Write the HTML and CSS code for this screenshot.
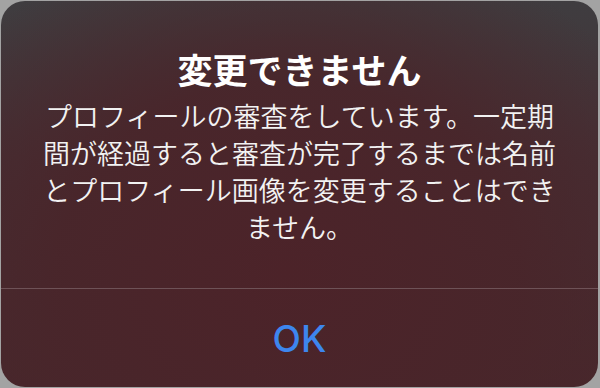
FILE: index.html
```html
<!DOCTYPE html>
<html lang="ja">

<head>
    <meta charset="UTF-8">
    <meta name="viewport"
          content="width=device-width, initial-scale=1.0">
    <title>Alert</title>
    <link rel="stylesheet" href="styles.css">
</head>

<body>
    <div id="alert">
        <div class="alert-content">
            <div class="alert-title">変更できません</div>
            <div class="alert-message">プロフィールの審査をしています。一定期間が経過すると審査が完了するまでは名前とプロフィール画像を変更することはできません。</div>
        </div>
        <div class="alert-actions">
            <button class="alert-button">OK</button>
        </div>
    </div>
</body>

</html>
```

FILE: styles.css
```css
html,
body {
    margin: 0;
    padding: 0;
    width: 600px;
    height: 388px;
    overflow: hidden;
    background-color: #a3a3a3;
    font-family: "Noto Sans CJK JP", sans-serif;
}

#alert {
    margin: 1px 2px 0 1px;
    height: 386px;
    border-radius: 24px;
    overflow: hidden;
    display: flex;
    flex-direction: column;
    background:
        radial-gradient(ellipse 70% 90% at 48% 70%, #4c2329 0%, rgba(73, 37, 42, 0.9) 55%, rgba(62, 58, 61, 0) 100%),
        linear-gradient(180deg, #3f3d40 0%, #453035 40%, #47282c 100%);
}

.alert-content {
    height: 287px;
    box-sizing: border-box;
    padding: 48px 40px 0;
    text-align: center;
    color: #f2f2f2;
}

.alert-title {
    font-size: 35px;
    font-weight: 700;
    line-height: 40px;
    margin-bottom: 8px;
    color: #ffffff;
}

.alert-message {
    font-size: 27px;
    font-weight: 350;
    line-height: 37px;
}

.alert-actions {
    flex: 1;
    display: flex;
    align-items: center;
    justify-content: center;
    border-top: 1px solid #6e5257;
}

.alert-button {
    background: none;
    border: none;
    padding: 0;
    font-family: Inter, "Noto Sans", sans-serif;
    font-size: 37px;
    font-weight: 500;
    color: #3d86ee;
    cursor: pointer;
}
```
